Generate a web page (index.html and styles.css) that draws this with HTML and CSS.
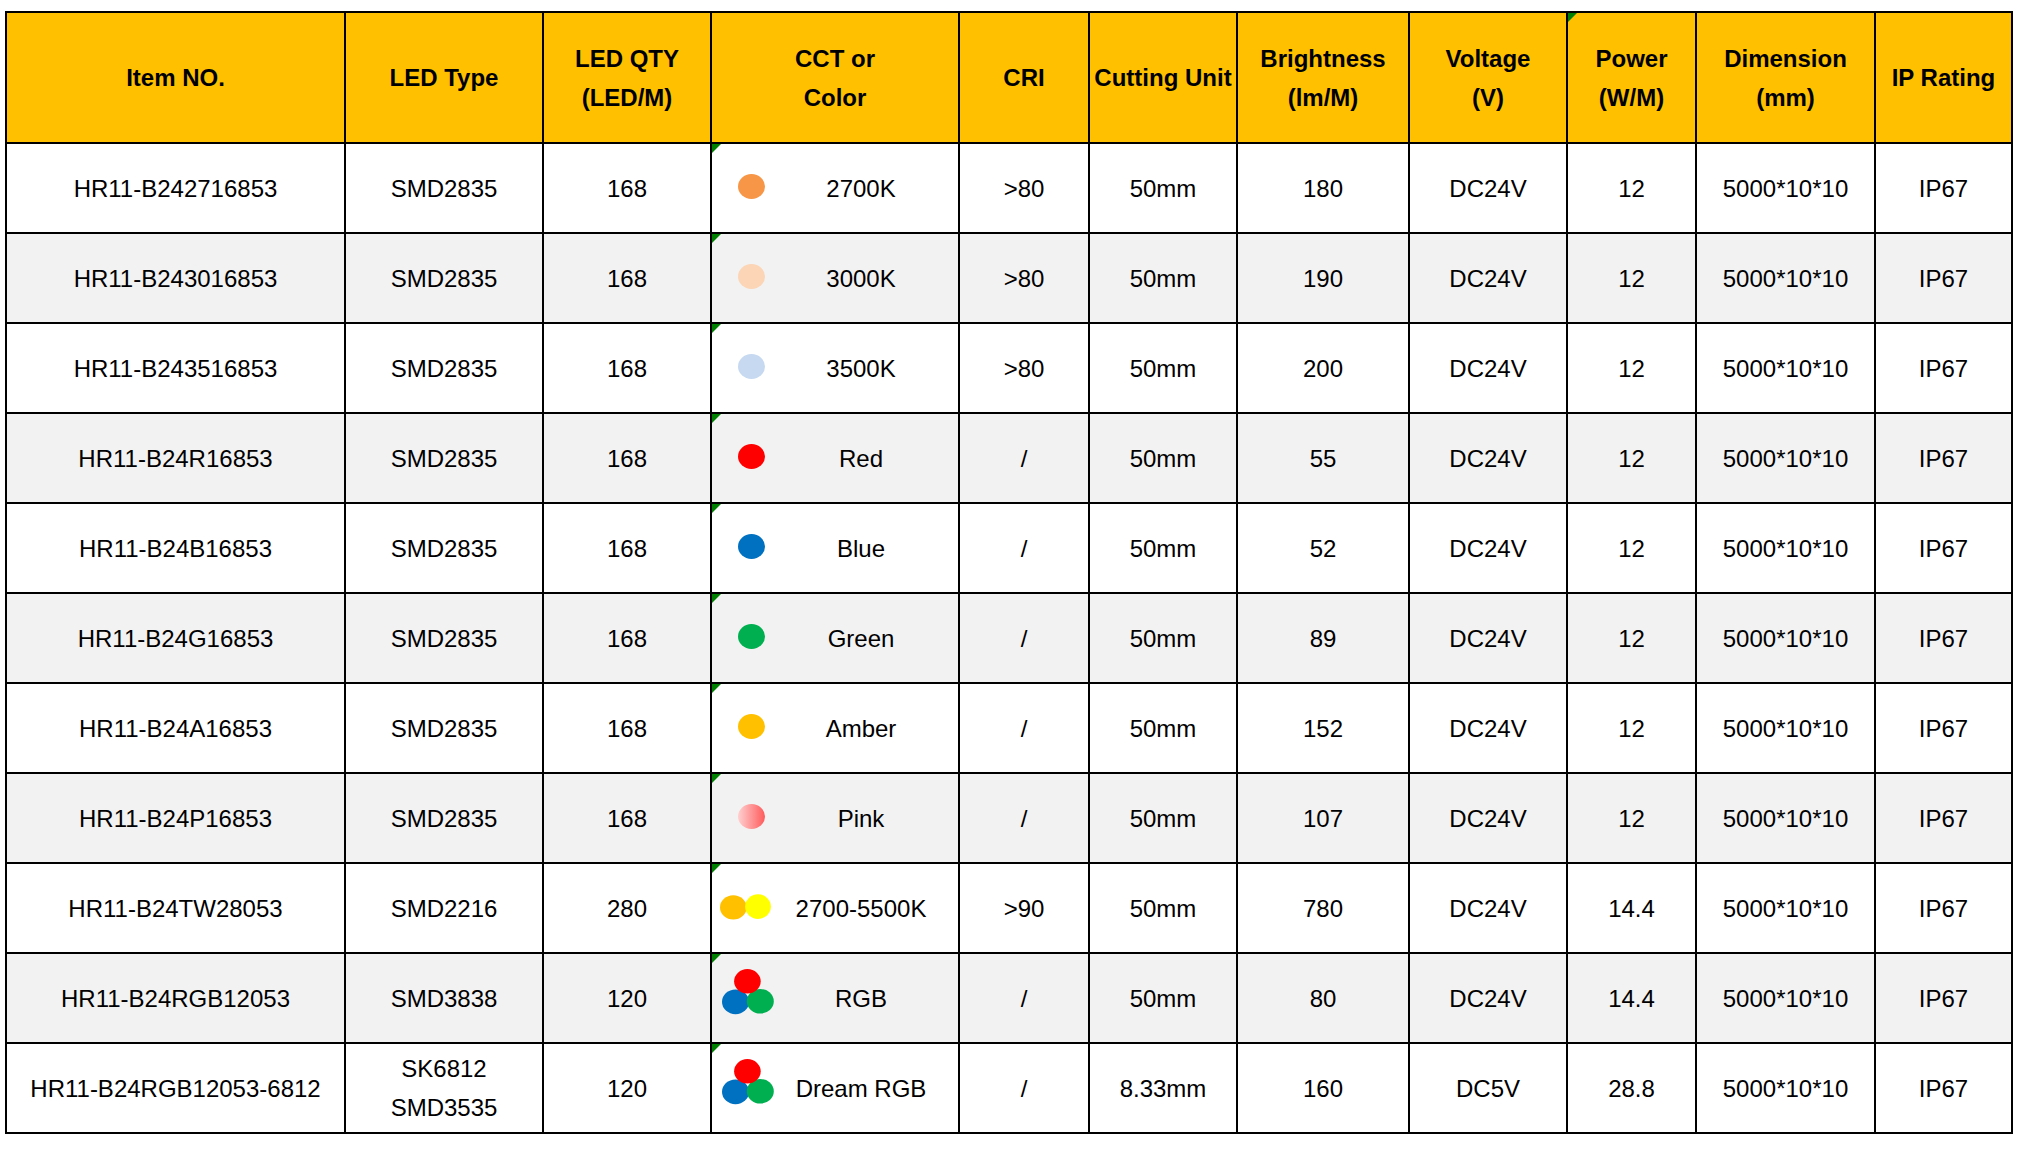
FILE: index.html
```html
<!DOCTYPE html>
<html lang="en">
<head>
<meta charset="utf-8">
<title>LED Strip Specification</title>
<link rel="stylesheet" href="styles.css">
</head>
<body>
<div class="page">
  <div class="sheet">
    <div class="row head">
      <div class="cell">Item NO.</div>
      <div class="cell">LED Type</div>
      <div class="cell">LED QTY<br>(LED/M)</div>
      <div class="cell">CCT or<br>Color</div>
      <div class="cell">CRI</div>
      <div class="cell">Cutting Unit</div>
      <div class="cell">Brightness<br>(lm/M)</div>
      <div class="cell">Voltage<br>(V)</div>
      <div class="cell flag">Power<br>(W/M)</div>
      <div class="cell">Dimension<br>(mm)</div>
      <div class="cell">IP Rating</div>
    </div>

    <div class="row">
      <div class="cell">HR11-B242716853</div>
      <div class="cell">SMD2835</div>
      <div class="cell">168</div>
      <div class="cell cct flag"><span class="dot c-2700"></span><span class="label">2700K</span></div>
      <div class="cell">&gt;80</div>
      <div class="cell">50mm</div>
      <div class="cell">180</div>
      <div class="cell">DC24V</div>
      <div class="cell">12</div>
      <div class="cell">5000*10*10</div>
      <div class="cell">IP67</div>
    </div>

    <div class="row alt">
      <div class="cell">HR11-B243016853</div>
      <div class="cell">SMD2835</div>
      <div class="cell">168</div>
      <div class="cell cct flag"><span class="dot c-3000"></span><span class="label">3000K</span></div>
      <div class="cell">&gt;80</div>
      <div class="cell">50mm</div>
      <div class="cell">190</div>
      <div class="cell">DC24V</div>
      <div class="cell">12</div>
      <div class="cell">5000*10*10</div>
      <div class="cell">IP67</div>
    </div>

    <div class="row">
      <div class="cell">HR11-B243516853</div>
      <div class="cell">SMD2835</div>
      <div class="cell">168</div>
      <div class="cell cct flag"><span class="dot c-3500"></span><span class="label">3500K</span></div>
      <div class="cell">&gt;80</div>
      <div class="cell">50mm</div>
      <div class="cell">200</div>
      <div class="cell">DC24V</div>
      <div class="cell">12</div>
      <div class="cell">5000*10*10</div>
      <div class="cell">IP67</div>
    </div>

    <div class="row alt">
      <div class="cell">HR11-B24R16853</div>
      <div class="cell">SMD2835</div>
      <div class="cell">168</div>
      <div class="cell cct flag"><span class="dot c-red"></span><span class="label">Red</span></div>
      <div class="cell">/</div>
      <div class="cell">50mm</div>
      <div class="cell">55</div>
      <div class="cell">DC24V</div>
      <div class="cell">12</div>
      <div class="cell">5000*10*10</div>
      <div class="cell">IP67</div>
    </div>

    <div class="row">
      <div class="cell">HR11-B24B16853</div>
      <div class="cell">SMD2835</div>
      <div class="cell">168</div>
      <div class="cell cct flag"><span class="dot c-blue"></span><span class="label">Blue</span></div>
      <div class="cell">/</div>
      <div class="cell">50mm</div>
      <div class="cell">52</div>
      <div class="cell">DC24V</div>
      <div class="cell">12</div>
      <div class="cell">5000*10*10</div>
      <div class="cell">IP67</div>
    </div>

    <div class="row alt">
      <div class="cell">HR11-B24G16853</div>
      <div class="cell">SMD2835</div>
      <div class="cell">168</div>
      <div class="cell cct flag"><span class="dot c-green"></span><span class="label">Green</span></div>
      <div class="cell">/</div>
      <div class="cell">50mm</div>
      <div class="cell">89</div>
      <div class="cell">DC24V</div>
      <div class="cell">12</div>
      <div class="cell">5000*10*10</div>
      <div class="cell">IP67</div>
    </div>

    <div class="row">
      <div class="cell">HR11-B24A16853</div>
      <div class="cell">SMD2835</div>
      <div class="cell">168</div>
      <div class="cell cct flag"><span class="dot c-amber"></span><span class="label">Amber</span></div>
      <div class="cell">/</div>
      <div class="cell">50mm</div>
      <div class="cell">152</div>
      <div class="cell">DC24V</div>
      <div class="cell">12</div>
      <div class="cell">5000*10*10</div>
      <div class="cell">IP67</div>
    </div>

    <div class="row alt">
      <div class="cell">HR11-B24P16853</div>
      <div class="cell">SMD2835</div>
      <div class="cell">168</div>
      <div class="cell cct flag"><span class="dot c-pink"></span><span class="label">Pink</span></div>
      <div class="cell">/</div>
      <div class="cell">50mm</div>
      <div class="cell">107</div>
      <div class="cell">DC24V</div>
      <div class="cell">12</div>
      <div class="cell">5000*10*10</div>
      <div class="cell">IP67</div>
    </div>

    <div class="row">
      <div class="cell">HR11-B24TW28053</div>
      <div class="cell">SMD2216</div>
      <div class="cell">280</div>
      <div class="cell cct flag">
        <svg class="pair" width="51" height="26" viewBox="0 0 51 26" aria-hidden="true">
          <ellipse cx="13.3" cy="13.4" rx="13.3" ry="12.2" fill="#FFC000"/>
          <ellipse cx="38" cy="12.6" rx="12.9" ry="12.3" fill="#FFFF00"/>
        </svg>
        <span class="label">2700-5500K</span>
      </div>
      <div class="cell">&gt;90</div>
      <div class="cell">50mm</div>
      <div class="cell">780</div>
      <div class="cell">DC24V</div>
      <div class="cell">14.4</div>
      <div class="cell">5000*10*10</div>
      <div class="cell">IP67</div>
    </div>

    <div class="row alt">
      <div class="cell">HR11-B24RGB12053</div>
      <div class="cell">SMD3838</div>
      <div class="cell">120</div>
      <div class="cell cct flag">
        <svg class="rgb" width="52" height="46" viewBox="0 0 52 46" aria-hidden="true">
          <ellipse cx="13.5" cy="32.8" rx="13.5" ry="12.4" fill="#0070C0"/>
          <ellipse cx="38.3" cy="32.3" rx="13.5" ry="12.3" fill="#00B050"/>
          <ellipse cx="25.4" cy="12.3" rx="13.3" ry="12.2" fill="#FF0000"/>
        </svg>
        <span class="label">RGB</span>
      </div>
      <div class="cell">/</div>
      <div class="cell">50mm</div>
      <div class="cell">80</div>
      <div class="cell">DC24V</div>
      <div class="cell">14.4</div>
      <div class="cell">5000*10*10</div>
      <div class="cell">IP67</div>
    </div>

    <div class="row">
      <div class="cell">HR11-B24RGB12053-6812</div>
      <div class="cell">SK6812<br>SMD3535</div>
      <div class="cell">120</div>
      <div class="cell cct flag">
        <svg class="rgb" width="52" height="46" viewBox="0 0 52 46" aria-hidden="true">
          <ellipse cx="13.5" cy="32.8" rx="13.5" ry="12.4" fill="#0070C0"/>
          <ellipse cx="38.3" cy="32.3" rx="13.5" ry="12.3" fill="#00B050"/>
          <ellipse cx="25.4" cy="12.3" rx="13.3" ry="12.2" fill="#FF0000"/>
        </svg>
        <span class="label">Dream RGB</span>
      </div>
      <div class="cell">/</div>
      <div class="cell">8.33mm</div>
      <div class="cell">160</div>
      <div class="cell">DC5V</div>
      <div class="cell">28.8</div>
      <div class="cell">5000*10*10</div>
      <div class="cell">IP67</div>
    </div>
  </div>
</div>
</body>
</html>
```

FILE: styles.css
```css
html, body {
  margin: 0;
  padding: 0;
  background: #ffffff;
}

.page {
  padding: 11px 0 0 5px;
}

.sheet {
  display: grid;
  width: max-content;
  grid-template-columns: 337px 196px 166px 246px 128px 146px 170px 156px 127px 177px 135px;
  grid-template-rows: 129px repeat(11, 88px);
  gap: 2px;
  padding: 2px;
  background: #000000;
  font-family: "Liberation Sans", Arial, Helvetica, sans-serif;
  font-size: 24px;
  line-height: 39px;
  color: #000000;
}

.row {
  display: contents;
}

.cell {
  position: relative;
  display: flex;
  align-items: center;
  justify-content: center;
  text-align: center;
  background: #ffffff;
  white-space: nowrap;
}

.row.alt > .cell {
  background: #F2F2F2;
}

.row.head > .cell {
  background: #FFC000;
  font-weight: bold;
}

/* comment indicator triangle */
.flag::before {
  content: "";
  position: absolute;
  top: 0;
  left: 0;
  width: 0;
  height: 0;
  border-top: 9px solid #008000;
  border-right: 9px solid transparent;
}

/* colour column */
.cell.cct {
  display: grid;
  grid-template-columns: 52px 1fr;
  align-items: center;
  justify-content: stretch;
}

.cct .label {
  text-align: center;
}

.dot {
  display: block;
  width: 27px;
  height: 25px;
  border-radius: 50%;
  margin-left: 26px;
  margin-bottom: 3px;
}

.c-2700 { background: #F79646; }
.c-3000 { background: #FBD5B5; }
.c-3500 { background: #C6D9F1; }
.c-red { background: #FF0000; }
.c-blue { background: #0070C0; }
.c-green { background: #00B050; }
.c-amber { background: #FFC000; }
.c-pink { background: linear-gradient(to right, #FFD0D0, #FF5A5A); }

.pair {
  display: block;
  margin-left: 8px;
  margin-bottom: 2px;
}

.rgb {
  display: block;
  margin-left: 10px;
  margin-bottom: 13px;
}
```
